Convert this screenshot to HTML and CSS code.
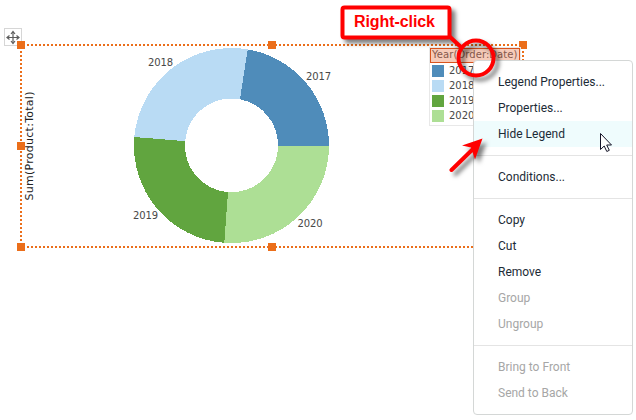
FILE: index.html
```html
<!DOCTYPE html>
<html lang="en">
<head>
<meta charset="utf-8">
<title>Chart legend menu</title>
<link rel="stylesheet" href="styles.css">
</head>
<body>
<main class="stage">
  <svg class="layer" width="636" height="420" viewBox="0 0 636 420">
    <rect x="4.500" y="28.500" width="17" height="17" fill="#fff" stroke="#d6d6d6"/>
    <g stroke="#5c5c5c" fill="none" stroke-width="1.2"><path d="M13 32v11M7.500 37.500h11"/><path d="M11 34l2-2.500 2 2.500M11 41l2 2.500 2-2.500M9.500 35.500l-2.500 2 2.500 2M16.500 35.500l2.500 2-2.500 2"/></g>
    <g shape-rendering="crispEdges">
      <path fill="#4f8cba" d="M329 146A97.500 97.500 0 0 0 247.700 49.400L240 99.300A46.500 46.500 0 0 1 278 146Z"/>
      <path fill="#b9dbf4" d="M247.700 49.400A97.500 97.500 0 0 0 134.300 137L185.200 141.200A46.500 46.500 0 0 1 240 99.300Z"/>
      <path fill="#61a53f" d="M134.300 137A97.500 97.500 0 0 0 224.300 242.800L228 192A46.500 46.500 0 0 1 185.200 141.200Z"/>
      <path fill="#addf95" d="M224.300 242.800A97.500 97.500 0 0 0 329 146L278 146A46.500 46.500 0 0 1 228 192Z"/>
      <g stroke="#eb6e1a" stroke-width="2" stroke-dasharray="2 2">
        <path d="M27 45H519M27 247H519"/>
        <path d="M21 51V243M523 51V243"/>
      </g>
      <path fill="#eb6e1a" d="M17 41h8v8h-8zM268 41h8v8h-8zM519 41h8v8h-8zM17 142h8v8h-8zM17 243h8v8h-8zM268 243h8v8h-8z"/>
    </g>
    <g class="chart-label">
      <text x="148" y="65.500" textLength="25">2018</text>
      <text x="306" y="80" textLength="25">2017</text>
      <text x="133" y="219" textLength="25">2019</text>
      <text x="297.500" y="227" textLength="25">2020</text>
    </g>
    <text class="axis" transform="translate(33 200.500) rotate(-90)" textLength="109">Sum(Product:Total)</text>
  </svg>

  <section class="legend">
    <h2 class="legend-title">Year(Order:Date)</h2>
    <ul class="legend-list">
      <li><i class="swatch y2017"></i>2017</li>
      <li><i class="swatch y2018"></i>2018</li>
      <li><i class="swatch y2019"></i>2019</li>
      <li><i class="swatch y2020"></i>2020</li>
    </ul>
  </section>

  <nav class="menu">
    <div class="item">Legend Properties...</div>
    <div class="item">Properties...</div>
    <div class="item active">Hide Legend</div>
    <hr>
    <div class="item">Conditions...</div>
    <hr>
    <div class="item">Copy</div>
    <div class="item">Cut</div>
    <div class="item">Remove</div>
    <div class="item disabled">Group</div>
    <div class="item disabled">Ungroup</div>
    <hr>
    <div class="item disabled">Bring to Front</div>
    <div class="item disabled">Send to Back</div>
  </nav>

  <svg class="layer" width="636" height="420" viewBox="0 0 636 420">
    <g class="shadow">
      <circle cx="476" cy="58" r="17.500" fill="none" stroke="#f00" stroke-width="4"/>
      <path d="M449 36L462 48" stroke="#f00" stroke-width="4"/>
      <rect x="342.500" y="7.500" width="107" height="30" rx="2" fill="#fff" stroke="#f00" stroke-width="4"/>
    </g>
    <text class="callout" x="354" y="27" textLength="81">Right-click</text>
    <g class="shadow">
      <path d="M451.500 170L473 149" stroke="#f00" stroke-width="4" stroke-linecap="round"/>
      <path fill="#f00" d="M482.500 138.500L462 145.500L471 147.500L475 159.500Z"/>
    </g>
    <path d="M600.500 133.500V149.500L604.200 146L606.800 151.500L609.300 150.300L606.700 145H611.500Z" fill="#fff" stroke="#151528" stroke-width="1"/>
  </svg>
</main>
</body>
</html>
```

FILE: styles.css
```css
* { box-sizing: border-box; }
body { margin: 0; background: #fff; }
.stage { position: relative; width: 636px; height: 420px; overflow: hidden; }
.layer { position: absolute; inset: 0; pointer-events: none; }
.chart-label { font: 10px "DejaVu Sans", sans-serif; fill: #484848; }
.axis { font: 11px "DejaVu Sans", sans-serif; fill: #222; }
.legend {
  position: absolute; left: 429px; top: 47px; width: 92px; height: 79px;
  border: 1px solid #e8e8e8;
  font: 10px/15px "DejaVu Sans", sans-serif; color: #484848;
}
.legend-title {
  margin: 0; height: 15px; width: 90px; padding-left: 1px;
  border: 1px solid #d9541e; background: #f6cbb9;
  font: 10px/12px "DejaVu Sans", sans-serif; letter-spacing: 0.06px;
  color: #86594c; white-space: nowrap;
}
.legend-list { margin: 0; padding: 0 0 0 2px; list-style: none; }
.legend-list li { display: flex; align-items: center; gap: 5px; height: 15px; }
.swatch { width: 12px; height: 12px; }
.y2017 { background: #4f8cba; }
.y2018 { background: #b9dbf4; }
.y2019 { background: #61a53f; }
.y2020 { background: #addf95; }
.menu {
  position: absolute; left: 473px; top: 60px; width: 160px; height: 355px;
  padding: 8px 0; border: 1px solid #d4d7d6; border-radius: 4px; background: #fff;
  font: 12px/26px Roboto, sans-serif; color: #1c2b36;
}
.item { height: 26px; padding-left: 24px; white-space: nowrap; }
.active { background: #effcfd; }
.disabled { color: #a6a6a6; }
.menu hr { height: 1px; margin: 8px 0; border: 0; background: #e4e4e4; }
.shadow { filter: drop-shadow(4px 4px 2px rgba(0, 0, 0, .5)); }
.callout { font: bold 16px "Liberation Sans", sans-serif; fill: #f00; }
```
